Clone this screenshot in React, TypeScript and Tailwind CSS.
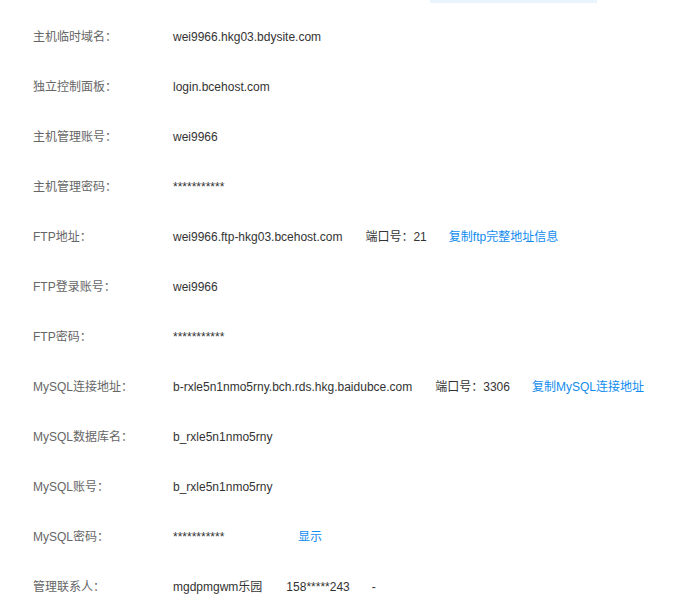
import type React from "react"

interface Row {
  label: string
  value: React.ReactNode
}

const link = "ml-[22px] text-[#108cee] cursor-pointer hover:underline"

const rows: Row[] = [
  { label: "主机临时域名：", value: "wei9966.hkg03.bdysite.com" },
  { label: "独立控制面板：", value: "login.bcehost.com" },
  { label: "主机管理账号：", value: "wei9966" },
  { label: "主机管理密码：", value: "***********" },
  {
    label: "FTP地址：",
    value: (
      <>
        <span>wei9966.ftp-hkg03.bcehost.com</span>
        <span className="ml-[23px]">端口号：21</span>
        <span className={link}>复制ftp完整地址信息</span>
      </>
    ),
  },
  { label: "FTP登录账号：", value: "wei9966" },
  { label: "FTP密码：", value: "***********" },
  {
    label: "MySQL连接地址：",
    value: (
      <>
        <span>b-rxle5n1nmo5rny.bch.rds.hkg.baidubce.com</span>
        <span className="ml-[23px]">端口号：3306</span>
        <span className={link}>复制MySQL连接地址</span>
      </>
    ),
  },
  { label: "MySQL数据库名：", value: "b_rxle5n1nmo5rny" },
  { label: "MySQL账号：", value: "b_rxle5n1nmo5rny" },
  {
    label: "MySQL密码：",
    value: (
      <>
        <span className="inline-block w-[101px]">***********</span>
        <span className="ml-6 text-[#108cee] cursor-pointer hover:underline">显示</span>
      </>
    ),
  },
  {
    label: "管理联系人：",
    value: (
      <>
        <span>mgdpmgwm乐园</span>
        <span className="ml-6">158*****243</span>
        <span className="ml-[22px]">-</span>
      </>
    ),
  },
]

export default function App() {
  return (
    <div
      className="w-[685px] h-[609px] bg-white overflow-hidden text-[12px]"
      style={{ fontFamily: '"Liberation Sans", Arial, "Noto Sans CJK SC", sans-serif' }}
    >
      <div className="flex h-[3px]">
        <div className="w-[430px]" />
        <div className="w-[167px] bg-[#eaf4fd]" />
      </div>
      <div className="flex flex-col pt-[9px] pl-[33px]">
        {rows.map((row, i) => (
          <div key={i} className="flex items-center h-[50px] leading-[16px]">
            <div className="w-[140px] text-[#666666]">{row.label}</div>
            <div className="flex items-center text-[#333333] whitespace-nowrap">{row.value}</div>
          </div>
        ))}
      </div>
    </div>
  )
}
